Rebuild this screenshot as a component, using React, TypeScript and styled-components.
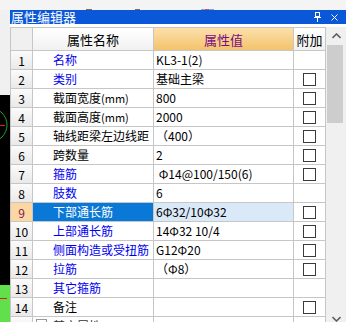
import React from 'react'
import styled, { createGlobalStyle } from 'styled-components'

const GlobalStyle = createGlobalStyle`
    html, body {
        margin: 0;
        padding: 0;
        background: #f0f0f0;
    }
    * {
        box-sizing: border-box;
    }
`

const Page = styled.div`
    width: 346px;
    height: 322px;
    overflow: hidden;
    display: flex;
    flex-direction: column;
    background: #f2f2f2;
    font-family: 'Noto Sans CJK SC', 'Noto Sans', sans-serif;
`

const Toolbar = styled.div`
    height: 10px;
    flex: none;
    background: #f4f4f4;
`

const Main = styled.div`
    flex: 1;
    display: flex;
    min-height: 0;
`

const Canvas = styled.div`
    width: 10px;
    flex: none;
`

const Panel = styled.div`
    flex: 1;
    display: flex;
    flex-direction: column;
    min-width: 0;
`

const TitleBar = styled.div`
    height: 14px;
    flex: none;
    background: #0a57d8;
    color: #fff;
    display: flex;
    align-items: center;
    justify-content: space-between;
    padding: 0 8px 0 1px;
    font-size: 13px;
    line-height: 14px;
`

const TitleTools = styled.div`
    display: flex;
    align-items: center;
    gap: 10px;
`

const Body = styled.div`
    flex: 1;
    display: flex;
    align-items: flex-start;
    background: #fff;
    padding-top: 3px;
    min-height: 0;
`

const Grid = styled.div`
    width: 316px;
    flex: none;
    display: grid;
    grid-template-columns: 21px 120px 139px 31px;
    grid-template-rows: 22px;
    grid-auto-rows: 18px;
    gap: 1px;
    background: #c6c6c6;
    border: 1px solid #c6c6c6;
    border-right: none;
`

const HeadCell = styled.div<{ $kind: 'num' | 'name' | 'value' | 'attach' }>`
    display: flex;
    align-items: center;
    justify-content: center;
    font-size: 13px;
    white-space: nowrap;
    overflow: hidden;
    color: ${p => (p.$kind === 'value' ? '#7a0a86' : '#000')};
    background: ${p =>
        p.$kind === 'value'
            ? 'linear-gradient(#fce0aa, #f3c36c)'
            : p.$kind === 'num'
            ? '#f0f0f0'
            : 'linear-gradient(#ffffff, #f1f1f1)'};
`

const NumCell = styled.div<{ $active?: boolean }>`
    display: flex;
    align-items: center;
    justify-content: center;
    font-size: 12px;
    color: ${p => (p.$active ? '#7a1a5a' : '#000')};
    background: ${p => (p.$active ? '#fdd7a2' : 'linear-gradient(#fbfbfb, #e9e9e9)')};
`

const NameCell = styled.div<{ $link?: boolean; $selected?: boolean }>`
    display: flex;
    align-items: center;
    padding-left: 20px;
    font-size: 12px;
    line-height: 18px;
    white-space: nowrap;
    overflow: hidden;
    color: ${p => (p.$selected ? '#fff' : p.$link ? '#0000ee' : '#000')};
    background: ${p => (p.$selected ? '#0a78d6' : '#fff')};
`

const GroupCell = styled(NameCell)`
    padding-left: 3px;
    align-items: flex-start;
    gap: 6px;
    color: #333;
`

const ExpandBox = styled.span`
    width: 11px;
    height: 11px;
    margin-top: 2px;
    border: 1px solid #999;
    background: #fff;
    display: flex;
    align-items: center;
    justify-content: center;
    font-size: 10px;
    line-height: 1;
`

const Unit = styled.span`
    font-size: 11px;
`

const ValueCell = styled.div<{ $selected?: boolean }>`
    display: flex;
    align-items: center;
    padding-left: 2px;
    font-size: 12px;
    line-height: 18px;
    white-space: pre;
    overflow: hidden;
    color: #000;
    background: ${p => (p.$selected ? '#d9e9f8' : '#fff')};
`

const AttachCell = styled.div`
    display: flex;
    align-items: center;
    justify-content: center;
    background: #fff;
`

const Check = styled.span`
    width: 13px;
    height: 13px;
    border: 1px solid #3a3a3a;
    background: #fff;
`

const Scrollbar = styled.div`
    width: 20px;
    height: 300px;
    flex: none;
    display: flex;
    flex-direction: column;
    background: #f0f0f0;
`

const ScrollButton = styled.div`
    height: 17px;
    flex: none;
    display: flex;
    align-items: center;
    justify-content: center;
`

const Thumb = styled.div`
    height: 78px;
    margin: 1px 3px 0 1px;
    background: #cdcdcd;
`

const Track = styled.div`
    flex: 1;
`

type Row = {
    name: React.ReactNode
    value: string
    link?: boolean
    check?: boolean
    selected?: boolean
}

const rows: Row[] = [
    { name: '名称', value: 'KL3-1(2)', link: true },
    { name: '类别', value: '基础主梁', link: true, check: true },
    { name: <>截面宽度<Unit>(mm)</Unit></>, value: '800', check: true },
    { name: <>截面高度<Unit>(mm)</Unit></>, value: '2000', check: true },
    { name: '轴线距梁左边线距', value: '（400）', check: true },
    { name: '跨数量', value: '2', check: true },
    { name: '箍筋', value: ' Φ14@100/150(6)', link: true, check: true },
    { name: '肢数', value: '6', link: true },
    { name: '下部通长筋', value: '6Φ32/10Φ32', selected: true, check: true },
    { name: '上部通长筋', value: '14Φ32 10/4', link: true, check: true },
    { name: '侧面构造或受扭筋', value: 'G12Φ20', link: true, check: true },
    { name: '拉筋', value: '（Φ8）', link: true, check: true },
    { name: '其它箍筋', value: '', link: true },
    { name: '备注', value: '', check: true },
]

const Chevron: React.FC<{ down?: boolean }> = ({ down }) => (
    <svg width="9" height="6" viewBox="0 0 9 6">
        <polyline
            points={down ? '0.5,1 4.5,5 8.5,1' : '0.5,5 4.5,1 8.5,5'}
            fill="none"
            stroke="#606060"
            strokeWidth="1.6"
        />
    </svg>
)

const App: React.FC = () => {
    return (
        <Page>
            <GlobalStyle />
            <Toolbar>
                <svg width="346" height="10" viewBox="0 0 346 10">
                    <rect x="86" y="0" width="6" height="2" fill="#8a6a44" />
                    <rect x="135" y="0" width="5" height="2" fill="#8a6a44" />
                    <rect x="201" y="0" width="13" height="3" fill="#7fa7d8" />
                    <rect x="205" y="0" width="4" height="3" fill="#d85050" />
                </svg>
            </Toolbar>
            <Main>
                <Canvas>
                    <svg width="10" height="312" viewBox="0 0 10 312">
                        <rect x="0" y="0" width="10" height="312" fill="#f0f0f0" />
                        <rect x="0" y="85" width="10" height="227" fill="#000" />
                        <circle cx="-10" cy="115" r="17" fill="none" stroke="#1fa32a" strokeWidth="1" />
                        <line x1="0" y1="115.5" x2="5" y2="115.5" stroke="#e02020" />
                        <rect x="0" y="275" width="10" height="37" fill="#62e04c" />
                        <line x1="0" y1="288.5" x2="7" y2="288.5" stroke="#d02020" />
                    </svg>
                </Canvas>
                <Panel>
                    <TitleBar>
                        <span>属性编辑器</span>
                        <TitleTools>
                            <svg width="7" height="10" viewBox="0 0 7 10">
                                <rect x="1.5" y="0.5" width="4" height="4" fill="none" stroke="#fff" />
                                <line x1="0" y1="5.5" x2="7" y2="5.5" stroke="#fff" />
                                <line x1="3.5" y1="5" x2="3.5" y2="10" stroke="#fff" />
                            </svg>
                            <svg width="7" height="7" viewBox="0 0 7 7">
                                <path d="M0.5 0.5 L6.5 6.5 M6.5 0.5 L0.5 6.5" stroke="#fff" />
                            </svg>
                        </TitleTools>
                    </TitleBar>
                    <Body>
                        <Grid>
                            <HeadCell $kind="num" />
                            <HeadCell $kind="name">属性名称</HeadCell>
                            <HeadCell $kind="value">属性值</HeadCell>
                            <HeadCell $kind="attach">附加</HeadCell>
                            {rows.map((r, i) => (
                                <React.Fragment key={i}>
                                    <NumCell $active={r.selected}>{i + 1}</NumCell>
                                    <NameCell $link={r.link} $selected={r.selected}>
                                        {r.name}
                                    </NameCell>
                                    <ValueCell $selected={r.selected}>{r.value}</ValueCell>
                                    <AttachCell>{r.check && <Check />}</AttachCell>
                                </React.Fragment>
                            ))}
                            <NumCell />
                            <GroupCell>
                                <ExpandBox>+</ExpandBox>
                                其它属性
                            </GroupCell>
                            <ValueCell />
                            <AttachCell />
                        </Grid>
                        <Scrollbar>
                            <ScrollButton>
                                <Chevron />
                            </ScrollButton>
                            <Thumb />
                            <Track />
                            <ScrollButton>
                                <Chevron down />
                            </ScrollButton>
                        </Scrollbar>
                    </Body>
                </Panel>
            </Main>
        </Page>
    )
}

export default App
